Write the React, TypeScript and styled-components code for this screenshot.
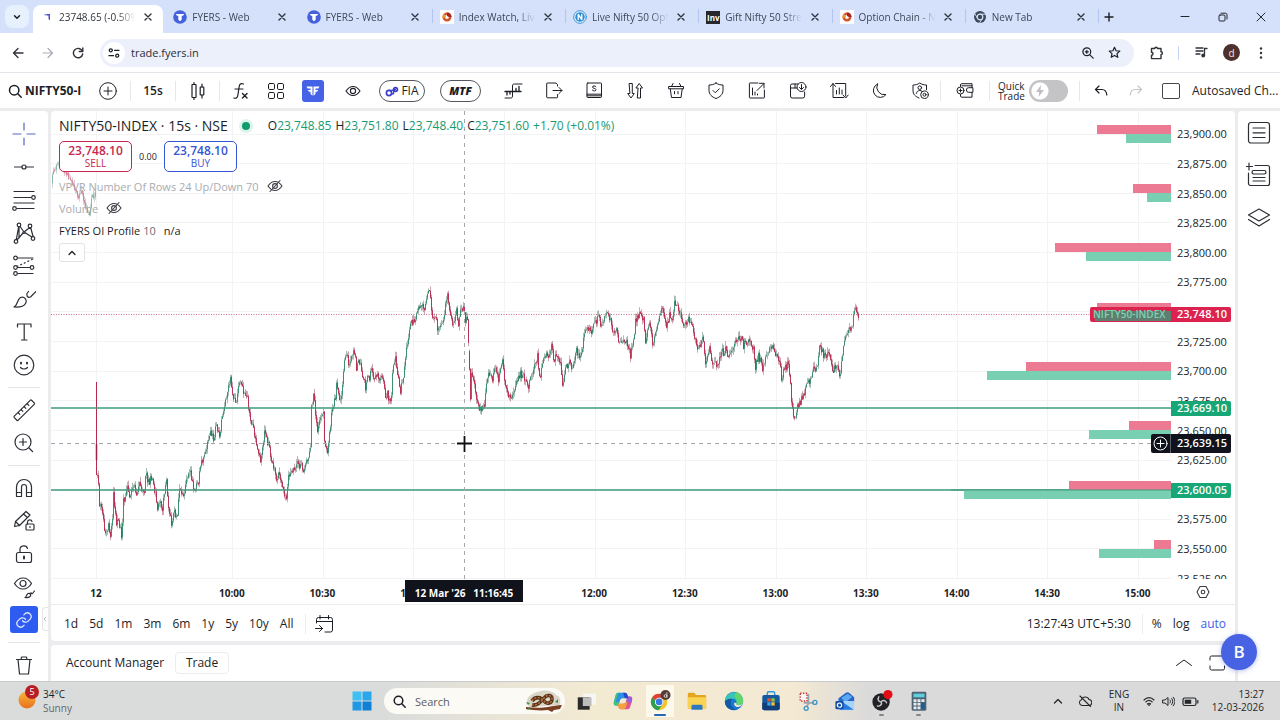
import React from "react";
import styled, { createGlobalStyle, css } from "styled-components";

const CHROME_FONT = '"Open Sans", "Noto Sans", sans-serif';
const INK = "#1c1e26";
const GAP = "#ececee";

const GlobalStyle = createGlobalStyle`
  *, *::before, *::after { box-sizing: border-box; }
  body { margin: 0; background: ${GAP}; color: ${INK}; font-family: ${CHROME_FONT}; font-size: 12px; }
  button { font: inherit; color: inherit; background: none; border: 0; padding: 0; margin: 0; cursor: pointer; }
  a { color: inherit; text-decoration: none; }
`;

const Page = styled.div`
  display: flex;
  flex-direction: column;
  min-height: 100vh;
`;

/* ---------- icons ---------- */

const Svg = styled.svg<{ $size?: number; $w?: number }>`
  display: block;
  flex: none;
  width: ${(p) => p.$size ?? 20}px;
  height: ${(p) => p.$size ?? 20}px;
  fill: none;
  stroke: currentColor;
  stroke-width: ${(p) => p.$w ?? 1};
  stroke-linecap: round;
  stroke-linejoin: round;
`;

type IconProps = { children: React.ReactNode; size?: number; box?: number; w?: number };
const Icon = ({ children, size = 20, box = 20, w = 1 }: IconProps) => (
  <Svg $size={size} $w={w} viewBox={`0 0 ${box} ${box}`} aria-hidden="true">
    {children}
  </Svg>
);

const CloseGlyph = () => (
  <Icon size={8} box={8} w={1.4}>
    <path d="M1 1l6 6M7 1l-6 6" />
  </Icon>
);

/* ---------- browser tab strip ---------- */

const TabStrip = styled.header`
  display: flex;
  height: 33px;
  padding-left: 5px;
  background: #d5e1fb;
`;

const TabSearch = styled.button`
  display: grid;
  place-items: center;
  width: 24px;
  height: 23px;
  margin: 5px 4px 0 0;
  border-radius: 8px;
  background: #e7f1fd;
`;

const Tabs = styled.nav`
  display: flex;
  flex: 0 1 1066px;
  min-width: 0;
`;

const Tab = styled.div<{ $active?: boolean; $divider?: boolean }>`
  display: flex;
  flex: 1 1 0;
  align-items: center;
  gap: 5px;
  min-width: 0;
  height: 28px;
  margin-top: 5px;
  padding: 0 12px 4px 7px;
  color: #3d4657;
  ${(p) =>
    p.$active &&
    css`
      margin-right: 3px;
      padding-right: 9px;
      border-radius: 8px 8px 0 0;
      background: #fff;
      color: #33363d;
    `}
  ${(p) =>
    p.$divider &&
    css`
      background: linear-gradient(#b3c5f0, #b3c5f0) right 4px / 1px 14px no-repeat;
    `}
`;

const TabTitle = styled.a`
  flex: 1;
  min-width: 0;
  overflow: hidden;
  white-space: nowrap;
  font-size: 10px;
  line-height: 16px;
  mask-image: linear-gradient(to right, #000 75%, transparent 98%);
`;

const TabClose = styled.button`
  display: grid;
  place-items: center;
  width: 12px;
  height: 12px;
  color: #2e333d;
`;

const NewTab = styled.button`
  display: grid;
  place-items: center;
  width: 20px;
  height: 33px;
`;

const WindowButtons = styled.div`
  display: flex;
  flex: 1;
  justify-content: flex-end;
`;

const WindowButton = styled.button`
  display: grid;
  place-items: center;
  width: 38px;
  height: 33px;
  color: #22262e;
`;

const FyersDisc = () => (
  <Icon size={14} box={14}>
    <circle cx="7" cy="7" r="6.8" fill="#4460dc" stroke="none" />
    <path d="M2.800 3.900h8.400L10 5.800H8.700v4L7 11.200 5.300 9.800v-4H4z" fill="#fff" stroke="none" />
  </Icon>
);
const FyersPlain = () => (
  <Icon size={14} box={14}>
    <path d="M4 4h3l1 1.500H5z" fill="#8d9bef" stroke="none" />
    <path d="M6.500 4H10v6.500L8.500 9V5.500H7.200z" fill="#4b50d6" stroke="none" />
  </Icon>
);
const NseMark = () => (
  <Icon size={14} box={14}>
    <rect width="14" height="14" fill="#fff" stroke="none" />
    <circle cx="7" cy="7" r="3.200" stroke="#d5542a" strokeWidth="2.600" />
    <path d="M7 2.500A4.500 4.500 0 0 1 11.500 7L7 7z" fill="#a8231d" stroke="none" />
    <path d="M2.700 8.200A4.500 4.500 0 0 1 4 3.700L6.500 7z" fill="#ee9a2c" stroke="none" />
    <path d="M5.800 5.300l3 1.800-3 1.600z" fill="#fff" stroke="none" />
  </Icon>
);
const NCircle = () => (
  <Icon size={14} box={14}>
    <circle cx="7" cy="7" r="6.300" fill="#fff" stroke="#2f8fd3" />
    <circle cx="7" cy="7" r="4.800" fill="#2c8ed6" stroke="none" />
    <path d="M5.200 9.500v-5l3.600 5v-5" stroke="#fff" strokeWidth="1.300" />
  </Icon>
);
const InvMark = styled.span`
  display: grid;
  place-items: center;
  width: 14px;
  height: 13px;
  background: #26282c;
  color: #fff;
  font-size: 8px;
  font-weight: 700;
  line-height: 13px;
`;
const ChromeDark = () => (
  <Icon size={14} box={14}>
    <circle cx="7" cy="7" r="6" fill="#3c4a57" stroke="none" />
    <circle cx="7" cy="7" r="2.800" fill="#3c4a57" stroke="#d5e1fb" strokeWidth="1.200" />
    <path d="M7 4.200h5.500M4.600 8.400L1.900 3.800M9.400 8.400l-2.700 4.500" stroke="#d5e1fb" strokeWidth="0.900" />
  </Icon>
);

const TABS: { title: string; icon: React.ReactNode }[] = [
  { title: "23748.65 (-0.50%)", icon: <FyersPlain /> },
  { title: "FYERS - Web", icon: <FyersDisc /> },
  { title: "FYERS - Web", icon: <FyersDisc /> },
  { title: "Index Watch, Live", icon: <NseMark /> },
  { title: "Live Nifty 50 Opt", icon: <NCircle /> },
  { title: "Gift Nifty 50 Stre", icon: <InvMark>Inv</InvMark> },
  { title: "Option Chain - N", icon: <NseMark /> },
  { title: "New Tab", icon: <ChromeDark /> },
];

const BrowserTabs = () => (
  <TabStrip>
    <TabSearch aria-label="Search tabs">
      <Icon size={8} box={8} w={1.5}>
        <path d="M1.500 2.800L4 5.300l2.500-2.500" />
      </Icon>
    </TabSearch>
    <Tabs aria-label="Tabs">
      {TABS.map((t, i) => (
        <Tab key={i} $active={i === 0} $divider={i > 1}>
          {t.icon}
          <TabTitle href="#">{t.title}</TabTitle>
          <TabClose aria-label="Close tab">
            <CloseGlyph />
          </TabClose>
        </Tab>
      ))}
    </Tabs>
    <NewTab aria-label="New tab">
      <Icon size={10} box={10} w={1.4}>
        <path d="M5 1v8M1 5h8" />
      </Icon>
    </NewTab>
    <WindowButtons>
      <WindowButton aria-label="Minimize">
        <Icon size={10} box={10}>
          <path d="M1 4.500h8" />
        </Icon>
      </WindowButton>
      <WindowButton aria-label="Restore">
        <Icon size={10} box={10}>
          <rect x="1" y="3" width="6" height="6" rx="1" />
          <path d="M3 1.200h4.500A1.500 1.500 0 0 1 9 2.700V7" />
        </Icon>
      </WindowButton>
      <WindowButton aria-label="Close window">
        <Icon size={10} box={10}>
          <path d="M1 1l8 8M9 1L1 9" />
        </Icon>
      </WindowButton>
    </WindowButtons>
  </TabStrip>
);

/* ---------- address bar ---------- */

const AddressRow = styled.div`
  display: flex;
  align-items: center;
  height: 40px;
  padding: 0 4px 0 3px;
  border-bottom: 1px solid #e3e5ea;
  background: #fff;
`;

const NavButton = styled.button<{ $dim?: boolean }>`
  display: grid;
  place-items: center;
  width: 30px;
  height: 28px;
  color: ${(p) => (p.$dim ? "#a9abb0" : "#2f3238")};
`;

const UrlBox = styled.label`
  display: flex;
  flex: 1;
  align-items: center;
  height: 28px;
  margin: 0 8px 0 7px;
  padding: 0 6px 0 3px;
  border-radius: 14px;
  background: #ebf0fb;
`;

const SiteInfo = styled.button`
  display: grid;
  place-items: center;
  width: 22px;
  height: 22px;
  margin-right: 6px;
  border-radius: 50%;
  background: #fff;
`;

const UrlInput = styled.input`
  flex: 1;
  min-width: 0;
  border: 0;
  padding: 0;
  outline: 0;
  background: none;
  color: #2b2e35;
  font-family: ${CHROME_FONT};
  font-size: 11px;
  line-height: 16px;
`;

const UrlAction = styled.button`
  display: grid;
  place-items: center;
  width: 27px;
  height: 28px;
`;

const BarDivider = styled.span`
  width: 1px;
  height: 14px;
  margin: 0 7px 0 6px;
  background: #c7d5f5;
`;

const Avatar = styled.button`
  width: 17px;
  height: 17px;
  margin: 0 6px 0 7px;
  border-radius: 50%;
  background: #4e302c;
  color: #f0e4e1;
  font-size: 10px;
  line-height: 16px;
`;

const AddressBar = () => (
  <AddressRow>
    <NavButton aria-label="Back">
      <Icon size={12} box={12} w={1.3}>
        <path d="M11 6H1.500M6 1.500L1.500 6 6 10.500" />
      </Icon>
    </NavButton>
    <NavButton aria-label="Forward" $dim>
      <Icon size={12} box={12} w={1.2}>
        <path d="M1 6h9.500M6 1.500L10.500 6 6 10.500" />
      </Icon>
    </NavButton>
    <NavButton aria-label="Reload">
      <Icon size={12} box={12} w={1.4}>
        <path d="M10.300 4A4.700 4.700 0 1 0 10.700 7" />
        <path d="M10.800 1v3.500H7.300" />
      </Icon>
    </NavButton>
    <UrlBox>
      <SiteInfo aria-label="Site information">
        <Icon size={12} box={12} w={1.3}>
          <circle cx="2.800" cy="3.300" r="1.500" />
          <path d="M6.500 3.300h4.500M1 8.700h4.500" />
          <circle cx="9.200" cy="8.700" r="1.500" />
        </Icon>
      </SiteInfo>
      <UrlInput aria-label="Address" defaultValue="trade.fyers.in" />
      <UrlAction aria-label="Zoom">
        <Icon size={12} box={12} w={1.2}>
          <circle cx="4.800" cy="4.800" r="3.900" />
          <path d="M7.800 7.800l3.400 3.400M4.800 3.300v3M3.300 4.800h3" />
        </Icon>
      </UrlAction>
      <UrlAction aria-label="Bookmark">
        <Icon size={13} box={24} w={2.2}>
          <path d="M12 2.500l2.900 6.300 6.900.7-5.200 4.600 1.500 6.800L12 17.400l-6.100 3.500 1.500-6.800L2.200 9.500l6.900-.7z" />
        </Icon>
      </UrlAction>
    </UrlBox>
    <NavButton aria-label="Extensions">
      <Icon size={14} box={14} w={1.4}>
        <path d="M1.500 2.500h3.300a1.300 1.300 0 0 1 2.600 0H11v3.300a1.400 1.400 0 0 1 0 2.800v4H1.500V9.200a1.500 1.500 0 0 0 0-3z" />
      </Icon>
    </NavButton>
    <BarDivider />
    <NavButton aria-label="Media">
      <Icon size={13} box={13} w={1.3}>
        <path d="M1 2h7M1 5h7M1 8h4" />
        <circle cx="8.200" cy="9.500" r="1.300" fill="currentColor" />
        <path d="M9.500 9.500V2.500h2.500" />
      </Icon>
    </NavButton>
    <Avatar aria-label="Profile">d</Avatar>
    <NavButton aria-label="Menu">
      <Icon size={12} box={12}>
        <g fill="currentColor" stroke="none">
          <circle cx="6" cy="1.500" r="1.200" />
          <circle cx="6" cy="6" r="1.200" />
          <circle cx="6" cy="10.500" r="1.200" />
        </g>
      </Icon>
    </NavButton>
  </AddressRow>
);

/* ---------- chart toolbar ---------- */

const Toolbar = styled.div`
  display: flex;
  align-items: center;
  height: 35px;
  margin-bottom: 3px;
  padding-left: 8px;
  overflow: hidden;
  background: #fff;
`;

const SymbolButton = styled.button`
  display: flex;
  align-items: center;
  gap: 3px;
  width: 75px;
  overflow: hidden;
  white-space: nowrap;
  font-size: 12px;
  font-weight: 700;
  line-height: 18px;
`;

const ToolButton = styled.button<{ $w?: number; $dim?: boolean; $bold?: boolean }>`
  display: grid;
  flex: none;
  place-items: center;
  width: ${(p) => p.$w ?? 40}px;
  height: 34px;
  color: ${(p) => (p.$dim ? "#c4c6cb" : INK)};
  font-size: 12px;
  font-weight: ${(p) => (p.$bold ? 600 : 400)};
`;

const ToolDivider = styled.span`
  flex: none;
  width: 1px;
  height: 20px;
  background: #e6e7ea;
`;

const BrandButton = styled.button`
  display: grid;
  flex: none;
  place-items: center;
  width: 22px;
  height: 22px;
  margin: 0 9px 0 8px;
  border-radius: 3px;
  background: #4563e6;
`;

const PillRow = styled.div`
  display: flex;
  flex: none;
  margin-left: 6px;
`;

const Pill = styled.button<{ $italic?: boolean }>`
  display: flex;
  flex: none;
  align-items: center;
  justify-content: center;
  gap: 2px;
  width: ${(p) => (p.$italic ? 41 : 46)}px;
  height: 22px;
  margin-right: ${(p) => (p.$italic ? 12 : 15)}px;
  border: 1px solid #55575e;
  border-radius: 11px;
  font-size: ${(p) => (p.$italic ? 11 : 12)}px;
  font-weight: ${(p) => (p.$italic ? 800 : 500)};
  font-style: ${(p) => (p.$italic ? "italic" : "normal")};
  line-height: 20px;
`;

const ToolGroup = styled.div`
  display: flex;
  flex: 1 0 auto;
  justify-content: space-between;
`;

const QuickTrade = styled.label`
  display: flex;
  flex: none;
  align-items: center;
  gap: 4px;
  width: 89px;
  padding-left: 8px;
  font-size: 10px;
  line-height: 10px;
`;

const Switch = styled.input`
  appearance: none;
  flex: none;
  width: 39px;
  height: 22px;
  margin: 0;
  border-radius: 11px;
  background: radial-gradient(circle at 11px 11px, #fff 8px, transparent 9px), #c4c4c6;
`;

const SwitchWrap = styled.span`
  position: relative;
  display: flex;
`;

const Bolt = styled.span`
  position: absolute;
  top: 4px;
  left: 4px;
  color: #c0c0c3;
`;

const SaveBox = styled.input`
  appearance: none;
  flex: none;
  width: 18px;
  height: 16px;
  margin: 0;
  border: 1px solid #44464d;
  border-radius: 2px;
`;

const SaveLabel = styled.label`
  display: flex;
  flex: none;
  align-items: center;
  gap: 12px;
  width: 130px;
  padding-left: 12px;
  white-space: nowrap;
  font-size: 12px;
  font-weight: 500;
`;

const TOOL_ICONS: { name: string; art: React.ReactNode }[] = [
  {
    name: "Strategy",
    art: (
      <>
        <path d="M2 17h5.500c1.500 0 2-.5 2-2V5c0-1.500.5-2 2-2H19" />
        <path d="M2 10.500h16M4 10.500V14M7 10.500v2.500M13 10.500V7.500M16 10.500V5.500" strokeWidth="1.300" />
      </>
    ),
  },
  {
    name: "Exit positions",
    art: (
      <path d="M13.500 5V3.500L12 2H3.500A.8.8 0 0 0 2.700 3v13a.8.8 0 0 0 .8.800h9.300a.8.8 0 0 0 .8-.8v-2.500M9 9.500h9M15 6.500l3 3-3 3" />
    ),
  },
  {
    name: "Straddle",
    art: (
      <>
        <rect x="3" y="2" width="14.500" height="14.500" rx="0.800" />
        <path d="M3 13.200h14.500M3 14.800h14.500" />
        <path d="M12 5.600c-.8-1-3.500-1-3.500.5s3.500 1 3.500 2.600-2.900 1.600-3.700.4" />
      </>
    ),
  },
  {
    name: "Buy and sell orders",
    art: (
      <>
        <path d="M4.500 2.500h2.800v10h2L6 17l-3.300-4.500h1.800z" />
        <path d="M12.700 17h2.800V7h2L14.200 2.500 10.900 7h1.800z" />
      </>
    ),
  },
  {
    name: "Basket",
    art: (
      <>
        <path d="M3 5.500h14.500v2.300H3zM4.300 8l1.200 8.500h9.500L16.200 8M5.500 5.500L7 2.500M15 5.500l-1.500-3M8.500 10.500v2.300M12 10.500v2.300" />
      </>
    ),
  },
  {
    name: "Protection",
    art: (
      <>
        <path d="M10 2c2 1.500 4.500 2 7 2v5.500c0 4-3 6.500-7 8-4-1.500-7-4-7-8V4c2.500 0 5-.5 7-2z" />
        <path d="M7 9.500l2.300 2.300 4-4" />
      </>
    ),
  },
  {
    name: "Analysis",
    art: (
      <>
        <path d="M11 2H3a.6.6 0 0 0-.6.6v13.800a.6.6 0 0 0 .6.6h13.800a.6.6 0 0 0 .6-.6V9M5.500 14V7M8 14v-3M10.500 14v-1" />
        <path d="M10 9.500L17 2.500M12.500 2.300H17V7" />
      </>
    ),
  },
  {
    name: "Order history",
    art: (
      <>
        <path d="M10 3H4a1.500 1.500 0 0 0-1.500 1.500V15A1.800 1.800 0 0 0 4.300 17h10.500a1.800 1.800 0 0 0 1.800-1.800V11M2.500 7H9M7 3v4" />
        <circle cx="13.500" cy="6" r="4.500" />
        <path d="M13.500 3.500V8M11.500 6.500l2 2 2-2" />
      </>
    ),
  },
  {
    name: "Market depth",
    art: (
      <>
        <path d="M6.500 2.500h10.200V15M1.500 5.500l2.500-3 2.500 3M4 2.500V16.500h10.500M14 14l2.700 3 2.500-3M7.500 13V9.500M10.300 13V7M13 13v-4" />
      </>
    ),
  },
  {
    name: "Dark theme",
    art: <path d="M8.500 3A7 7 0 1 0 17 13.500 7.500 7.500 0 0 1 8.500 3z" />,
  },
  {
    name: "Account safety",
    art: (
      <>
        <path d="M16.500 8.500V4c-2.500 0-4.500-.5-6.700-2C7.600 3.500 5.500 4 3 4v5.500c0 4 2.500 6 6 7.500" />
        <circle cx="9.800" cy="6.700" r="1.800" />
        <path d="M6.300 12.500c.5-2 1.700-3 3.500-3 1 0 1.700.3 2.300.8" />
        <circle cx="14.500" cy="13.700" r="3.800" />
        <circle cx="14.500" cy="13.700" r="1.500" />
      </>
    ),
  },
];

const ChartToolbar = () => (
  <Toolbar>
    <SymbolButton>
      <Icon size={14} box={14} w={1.5}>
        <circle cx="6.200" cy="6.200" r="4.700" />
        <path d="M9.800 9.800l3.400 3.400" />
      </Icon>
      NIFTY50-I
    </SymbolButton>
    <ToolButton $w={47} aria-label="Compare">
      <Icon size={22} box={22}>
        <circle cx="12" cy="11" r="8.300" />
        <path d="M12 7v8M8 11h8" />
      </Icon>
    </ToolButton>
    <ToolDivider />
    <ToolButton $w={44} $bold>
      15s
    </ToolButton>
    <ToolDivider />
    <ToolButton $w={43} aria-label="Candles">
      <Icon w={1.2}>
        <rect x="4" y="3.500" width="4" height="13" rx="0.500" />
        <path d="M6 1.500v2M6 16.500v2M14 3v3M14 14v3" />
        <rect x="12.200" y="6" width="3.600" height="8" rx="0.500" />
      </Icon>
    </ToolButton>
    <ToolDivider />
    <ToolButton aria-label="Indicators">
      <Icon w={1.200}>
        <path d="M13.500 3c-2.800-1.300-4 .3-4.400 3L7.900 14c-.4 2.800-1.600 3.800-4.100 3M5 8h8" />
        <path d="M12.500 12.500l4.500 4.500M17 12.500L12.500 17" strokeWidth="1.400" />
      </Icon>
    </ToolButton>
    <ToolButton $w={34} aria-label="Layouts">
      <Icon>
        <rect x="1.500" y="2.500" width="6" height="6" rx="1.300" />
        <rect x="10.500" y="2.500" width="6" height="6" rx="1.300" />
        <rect x="1.500" y="11.500" width="6" height="6" rx="1.300" />
        <rect x="10.500" y="11.500" width="6" height="6" rx="1.300" />
      </Icon>
    </ToolButton>
    <BrandButton aria-label="Fyers">
      <Icon size={16} box={16}>
        <g fill="#fff" stroke="none">
          <path d="M1.500 3.500h6v9.200L5.500 11V8.800H4L2.800 7h2.700V5.400H2.600z" />
          <path d="M14.500 3.500h-6v9.200l2-1.700V8.800H12L13.200 7h-2.700V5.400h2.900z" />
        </g>
      </Icon>
    </BrandButton>
    <ToolButton aria-label="Watch">
      <Icon size={16} box={16} w={1.1}>
        <path d="M1 8c2-3 4.300-4.500 7-4.500S13 5 15 8c-2 3-4.300 4.500-7 4.500S3 11 1 8z" />
        <circle cx="8" cy="8" r="2.600" />
      </Icon>
    </ToolButton>
    <PillRow>
      <Pill>
        <Icon size={14} box={14} w={1.7}>
          <g stroke="#3a3fc9">
            <circle cx="4" cy="9" r="2.600" />
            <circle cx="10.500" cy="5.500" r="1.900" />
            <path d="M4 6.400h2.500c1 0 2-.9 4-.9M6.600 9c.4 1 1.500 1.400 2 .4l0-3.900" strokeWidth="1.300" />
          </g>
        </Icon>
        FIA
      </Pill>
      <Pill $italic>MTF</Pill>
    </PillRow>
    <ToolGroup>
      {TOOL_ICONS.map((t) => (
        <ToolButton key={t.name} aria-label={t.name}>
          <Icon>{t.art}</Icon>
        </ToolButton>
      ))}
    </ToolGroup>
    <ToolDivider />
    <ToolButton $w={48} aria-label="Funds">
      <Icon>
        <path d="M5.500 5.500V4A1.300 1.300 0 0 1 6.800 2.700H17V6.500M17 11.500v4.700H6.800a1.300 1.300 0 0 1-1.300-1.200v-1.500M7 4.800h10" />
        <circle cx="5.500" cy="9.500" r="3.500" />
        <path d="M5.500 8v3M4 9.500h3M17.500 6.700h-3.800a2.300 2.300 0 0 0 0 4.600h3.800z" />
      </Icon>
    </ToolButton>
    <ToolDivider />
    <QuickTrade>
      <span>
        Quick
        <br />
        Trade
      </span>
      <SwitchWrap>
        <Switch type="checkbox" role="switch" />
        <Bolt>
          <Icon size={14} box={14}>
            <path d="M8 1L3 8h3.200L5.500 13 11 6H7.500z" fill="currentColor" stroke="none" />
          </Icon>
        </Bolt>
      </SwitchWrap>
    </QuickTrade>
    <ToolDivider />
    <ToolButton $w={42} aria-label="Undo">
      <Icon size={14} box={14} w={1.200}>
        <path d="M5 2L1.500 5.500 5 9M1.500 5.500h6.300c3 0 4.700 1.800 5 5.500" />
      </Icon>
    </ToolButton>
    <ToolButton $w={28} $dim aria-label="Redo">
      <Icon size={14} box={14} w={1.200}>
        <path d="M9 2l3.500 3.500L9 9M12.500 5.500H6.200c-3 0-4.700 1.800-5 5.500" />
      </Icon>
    </ToolButton>
    <SaveLabel>
      <SaveBox type="checkbox" />
      Autosaved Ch...
    </SaveLabel>
  </Toolbar>
);

/* ---------- workspace ---------- */

const Workspace = styled.main`
  display: grid;
  flex: 1;
  grid-template-columns: 48px minmax(0, 1fr) 42px;
  column-gap: 3px;
`;

const Rail = styled.nav<{ $right?: boolean }>`
  position: relative;
  display: flex;
  flex-direction: column;
  align-items: center;
  padding-top: ${(p) => (p.$right ? 1 : 6)}px;
  border-radius: ${(p) => (p.$right ? "4px 0 0 0" : "0 4px 0 0")};
  background: #fff;
`;

const RailButton = styled.button<{ $tall?: boolean; $color?: string }>`
  display: grid;
  flex: none;
  place-items: center;
  width: 40px;
  height: ${(p) => (p.$tall ? 42 : 33)}px;
  color: ${(p) => p.$color ?? "#2c2e35"};
`;

const LinkButton = styled.button`
  display: grid;
  flex: none;
  place-items: center;
  width: 28px;
  height: 27px;
  margin: 3px 0;
  border-radius: 3px;
  background: #2f5cf0;
  color: #dfe6ff;
`;

const RailDivider = styled.span`
  flex: none;
  width: 32px;
  height: 1px;
  margin: 6px 0 5px;
  background: #e4e5e8;
`;

const RailHandle = styled.button`
  position: absolute;
  right: 0;
  bottom: 50px;
  width: 6px;
  height: 24px;
  border: 1px solid #e4e5e8;
  border-right: 0;
  border-radius: 4px 0 0 4px;
  color: #a6a8ad;
`;

const RAIL_TOP: { name: string; color?: string; art: React.ReactNode }[] = [
  {
    name: "Crosshair",
    color: "#5566c4",
    art: <path d="M12 1v7M12 16v7M1 12h8M15 12h8" />,
  },
  {
    name: "Trend line",
    art: (
      <>
        <circle cx="12" cy="12" r="2" />
        <path d="M2.500 12H10M14 12h7.500" />
      </>
    ),
  },
  {
    name: "Fib retracement",
    art: (
      <>
        <path d="M2 3.500h20M2 9.500h18M2 15h20M4 20.500h18" />
        <circle cx="21.500" cy="9.500" r="1.800" fill="#fff" />
        <circle cx="2.500" cy="20.500" r="1.800" fill="#fff" />
      </>
    ),
  },
  {
    name: "Patterns",
    art: (
      <>
        <path d="M4 20L7 4l5 7 6.500-5L21.500 17 12 11 4 20M7 4v13" />
        <g fill="#fff">
          <circle cx="4" cy="20.500" r="1.800" />
          <circle cx="7" cy="4" r="1.800" />
          <circle cx="18" cy="5" r="1.800" />
          <circle cx="21" cy="17.500" r="1.800" />
          <circle cx="12" cy="11.500" r="1" />
        </g>
      </>
    ),
  },
  {
    name: "Forecasting",
    art: (
      <>
        <path d="M4 4h17M4 13.500h15M4 19.500h17" />
        <path d="M5 12.500L21 5" strokeDasharray="1 3" />
        <g fill="#fff">
          <circle cx="3.500" cy="4" r="1.800" />
          <circle cx="3.500" cy="13.500" r="1.800" />
          <circle cx="20" cy="13.500" r="1.800" />
          <circle cx="3.500" cy="19.500" r="1.800" />
        </g>
      </>
    ),
  },
  {
    name: "Brush",
    art: (
      <path d="M2 20c4-1.500 2.500-7 6.500-9.500 4-1.500 7 2.500 5 6-2 3.500-6 4-11.500 3.500M15 6.500c-.5 3 1 4.500 3.500 3.500L24 4.500M15 6.500l1.500-2" />
    ),
  },
  {
    name: "Text",
    art: <path d="M5.500 7V4h13.500v3M12.200 4v16M9.500 20H15" />,
  },
  {
    name: "Emoji",
    art: (
      <>
        <circle cx="12" cy="12" r="9.800" />
        <path d="M8.500 14.500c1.800 2 5.200 2 7 0" />
        <path d="M9 9.800v.6M15 9.800v.6" strokeWidth="2" />
      </>
    ),
  },
];

const RAIL_MID: { name: string; art: React.ReactNode }[] = [
  {
    name: "Measure",
    art: (
      <path d="M2.300 18.200L18.200 2.300a1 1 0 0 1 1.400 0l2.600 2.600a1 1 0 0 1 0 1.400L6.300 22.200a1 1 0 0 1-1.400 0l-2.600-2.600a1 1 0 0 1 0-1.400zM6 14.500l1.800 1.800M9 11.500l1.800 1.800M12 8.500l1.800 1.800M15 5.500l1.800 1.800" />
    ),
  },
  {
    name: "Zoom in",
    art: (
      <>
        <circle cx="11" cy="11" r="8" />
        <path d="M17 17l3.500 3.500M11 7.500v7M7.500 11h7" />
      </>
    ),
  },
];

const RAIL_LOW: { name: string; art: React.ReactNode }[] = [
  {
    name: "Magnet",
    art: (
      <path d="M4.500 20.500V11a7.500 7.500 0 0 1 15 0v9.500h-5V11a2.500 2.500 0 0 0-5 0v9.500zM4.500 16.500h5M14.500 16.500h5" />
    ),
  },
  {
    name: "Stay in drawing mode",
    art: (
      <>
        <path d="M2.500 17.500l1-5L14 2.500l4 3.500L7.500 16.500zM11.500 5l3.800 3.500M3.500 12.500l4 4" />
        <rect x="14" y="15" width="8" height="6" rx="1" />
        <path d="M15.500 15v-2a2.300 2.300 0 0 1 4.500-.5M18 17.500v1" />
      </>
    ),
  },
  {
    name: "Lock drawings",
    art: (
      <>
        <rect x="4.500" y="10.500" width="15" height="10" rx="2" />
        <path d="M8 10.500V7.500c0-4.500 6.500-5 7.500-1" />
        <path d="M12 14.500v2" strokeWidth="2" />
      </>
    ),
  },
  {
    name: "Hide drawings",
    art: (
      <>
        <path d="M2.500 8.500c2.500-4 5.500-5.500 8.500-5.500s6 1.500 8.500 5.500c-2.500 4-5.500 5.500-8.500 5.500s-6-1.500-8.500-5.500z" />
        <circle cx="11" cy="8.500" r="3" />
        <path d="M13 22.500c2-.5 1-3 3-4 2.500-.5 3.500 1.500 2 3-1.200 1.200-3 1.200-5 1zM19 17.500c0 1 .8 1.300 1.500 1L22.500 16" />
      </>
    ),
  },
];

const RailTools = ({ tools }: { tools: { name: string; color?: string; art: React.ReactNode }[] }) => (
  <>
    {tools.map((r) => (
      <RailButton key={r.name} aria-label={r.name} $color={r.color}>
        <Icon size={24} box={24} w={1.200}>
          {r.art}
        </Icon>
      </RailButton>
    ))}
  </>
);

const DrawingRail = () => (
  <Rail aria-label="Drawing tools">
    <RailTools tools={RAIL_TOP} />
    <RailDivider />
    <RailTools tools={RAIL_MID} />
    <RailDivider />
    <RailTools tools={RAIL_LOW} />
    <LinkButton aria-label="Sync drawings">
      <Icon size={18} box={24} w={1.700}>
        <path d="M10 13a5 5 0 0 0 7.500.5l3-3a5 5 0 0 0-7-7l-1.700 1.700" />
        <path d="M14 11a5 5 0 0 0-7.500-.5l-3 3a5 5 0 0 0 7 7l1.700-1.700" />
      </Icon>
    </LinkButton>
    <RailDivider />
    <RailButton aria-label="Remove drawings">
      <Icon size={24} box={24} w={1.200}>
        <path d="M4.500 6.500h15M9 6.500l.5-2.500h5l.5 2.500M6 6.500L7.500 21h9L18 6.500" />
      </Icon>
    </RailButton>
    <RailHandle aria-label="Hide drawing toolbar">
      <Icon size={4} box={4} w={0.800}>
        <path d="M3 0L1 2l2 2" />
      </Icon>
    </RailHandle>
  </Rail>
);

const WidgetRail = () => (
  <Rail $right aria-label="Widgets">
    <RailButton $tall aria-label="Watchlist">
      <Icon size={24} box={24} w={1.200}>
        <rect x="1.500" y="1.500" width="21" height="20.500" rx="2.500" />
        <path d="M6 7h12M6 11.800h12M6 16.500h12" />
      </Icon>
    </RailButton>
    <RailButton $tall aria-label="Add watchlist">
      <Icon size={26} box={26} w={1.200}>
        <path d="M9 3.500h12.500A2 2 0 0 1 23.500 5.500v16a2 2 0 0 1-2 2h-17a2 2 0 0 1-2-2V11M3 1v7M0 4.500h6.500" />
        <rect x="6" y="8.500" width="14" height="3.500" rx="1.700" />
        <path d="M7 15.500h12M7 19h12" />
      </Icon>
    </RailButton>
    <RailButton $tall aria-label="Object tree">
      <Icon size={24} box={24} w={1.200}>
        <path d="M12 4l10.500 6L12 16 1.500 10zM1.500 14.500l10.500 6.500 10.500-6.500" />
      </Icon>
    </RailButton>
  </Rail>
);

/* ---------- price plot ---------- */

const PLOT_W = 1120;
const PLOT_H = 468;

/* Turning points of the price line, in plot units. */
const SESSION: [number, number][] = [
  [46, 364], [48, 372], [49, 396], [51, 392], [53, 410], [55, 425], [57, 418], [58, 413], [60, 422], [62, 410],
  [63, 382], [64, 392], [66, 412], [68, 408], [70, 418], [71, 425], [73, 390], [75, 384], [77, 374], [79, 388],
  [81, 380], [83, 372], [86, 387], [89, 370], [91, 378], [94, 379], [95, 362], [98, 370], [101, 368], [104, 378],
  [107, 396], [110, 393], [112, 397], [114, 380], [116, 368], [118, 394], [121, 411], [124, 401], [127, 404],
  [129, 374], [133, 384], [137, 366], [140, 363], [144, 381], [148, 369], [151, 350], [153, 346], [156, 336],
  [159, 322], [163, 327], [166, 314], [169, 322], [171, 312], [174, 296], [176, 286], [178, 274], [180, 267],
  [183, 286], [186, 292], [188, 271], [192, 278], [197, 288], [200, 312], [203, 318], [206, 331], [210, 350],
  [214, 320], [218, 334], [222, 352], [226, 367], [229, 362], [233, 378], [236, 388], [238, 366], [242, 361],
  [247, 352], [250, 354], [254, 358], [257, 350], [260, 336], [261, 296], [263, 284], [267, 319], [270, 302],
  [273, 299], [274, 328], [277, 339], [279, 320], [281, 304], [283, 292], [285, 289], [286, 274], [290, 289],
  [292, 272], [294, 250], [296, 241], [298, 250], [304, 241], [306, 256], [308, 248], [311, 257], [315, 277],
  [317, 262], [319, 267], [321, 257], [324, 267], [327, 261], [329, 267], [332, 269], [335, 284], [337, 282],
  [340, 293], [341, 284], [342, 260], [345, 246], [347, 262], [350, 280], [353, 264], [356, 236], [358, 230],
  [360, 214], [364, 208], [367, 201], [370, 192], [374, 195], [378, 178], [380, 188], [382, 203], [385, 207],
  [387, 217], [390, 211], [392, 214], [395, 194], [397, 186], [399, 198], [403, 215], [406, 201], [408, 214],
  [411, 194], [413, 198], [415, 209], [417, 207], [418, 228],
];
const SESSION_TAIL: [number, number][] = [
  [418, 240], [419, 262], [420, 284], [421, 260], [423, 267], [425, 279], [428, 297], [430, 299], [434, 292],
  [437, 264], [439, 264], [442, 267], [445, 255], [448, 267], [452, 246], [454, 269], [458, 282], [462, 287],
  [466, 269], [470, 262], [474, 267], [478, 277], [482, 261], [487, 245], [489, 268], [493, 249], [495, 242],
  [498, 246], [501, 235], [503, 249], [507, 242], [510, 254], [512, 271], [515, 259], [519, 249], [522, 257],
  [526, 240], [530, 246], [532, 239], [534, 219], [537, 214], [540, 222], [545, 211], [548, 204], [550, 213],
  [556, 204], [560, 206], [562, 224], [566, 219], [569, 234], [573, 226], [577, 234], [580, 244], [583, 229],
  [585, 209], [589, 202], [593, 209], [595, 232], [599, 211], [602, 232], [606, 219], [610, 204], [612, 194],
  [616, 219], [619, 204], [622, 207], [624, 192], [628, 199], [633, 214], [638, 207], [642, 214], [646, 234],
  [649, 236], [652, 224], [655, 254], [659, 237], [662, 254], [667, 254], [671, 239], [674, 242], [676, 236],
  [678, 249], [681, 239], [685, 231], [689, 224], [693, 234], [698, 229], [703, 237], [705, 256], [708, 244],
  [712, 256], [716, 244], [721, 234], [725, 242], [729, 247], [731, 267], [734, 256], [738, 253], [740, 269],
  [741, 289], [744, 309], [746, 304], [747, 294], [752, 287], [755, 277], [759, 269], [761, 264], [764, 254],
  [766, 259], [769, 236], [772, 241], [775, 247], [778, 239], [782, 259], [786, 256], [790, 264], [792, 244],
  [793, 234], [796, 226], [799, 214], [801, 219], [804, 199], [807, 199], [808, 205],
];
const PREVIOUS: [number, number][] = [
  [1, 72], [3, 62], [5, 56], [8, 50], [12, 56], [20, 66], [24, 76], [28, 90], [31, 76], [35, 95], [39, 102], [41, 90], [45, 80],
];

type Bar = { x: number; open: number; close: number; high: number; low: number };

const buildBars = (points: [number, number][], seed: number): Bar[] => {
  let s = seed;
  const rand = () => {
    s = (s * 16807) % 2147483647;
    return s / 2147483647;
  };
  const bars: Bar[] = [];
  let prev = points[0][1];
  for (let i = 1; i < points.length; i++) {
    const [x0, y0] = points[i - 1];
    const [x1, y1] = points[i];
    for (let x = x0; x < x1; x++) {
      const t = (x + 1 - x0) / (x1 - x0);
      const target = y0 + (y1 - y0) * t;
      const close = target + (rand() - 0.5) * 8;
      bars.push({
        x,
        open: prev,
        close,
        high: Math.min(prev, close) - rand() * 5,
        low: Math.max(prev, close) + rand() * 5,
      });
      prev = close;
    }
  }
  return bars;
};

const BARS = [...buildBars(SESSION, 71), ...buildBars(SESSION_TAIL, 907)];
const OLD_BARS = buildBars(PREVIOUS, 33);

const wick = (b: Bar) => `M${b.x + 0.5} ${b.high.toFixed(1)}V${b.low.toFixed(1)}`;
const body = (b: Bar) => `M${b.x + 0.5} ${b.open.toFixed(1)}V${(b.close + 0.6).toFixed(1)}`;
const isUp = (b: Bar) => b.close < b.open;

const Candles = ({ bars }: { bars: Bar[] }) => (
  <g fill="none">
    <path d={bars.filter(isUp).map(wick).join("")} stroke="#6f8f86" strokeOpacity="0.6" />
    <path d={bars.filter((b) => !isUp(b)).map(wick).join("")} stroke="#a8687c" strokeOpacity="0.6" />
    <path d={bars.filter(isUp).map(body).join("")} stroke="#2f8a6c" strokeOpacity="0.9" />
    <path d={bars.filter((b) => !isUp(b)).map(body).join("")} stroke="#b8284f" strokeOpacity="0.9" />
  </g>
);

/* Open interest per strike: [top, call width, put width]. */
const OI: [number, number, number][] = [
  [14, 74, 45],
  [73, 38, 24],
  [132, 116, 85],
  [192, 74, 0],
  [251, 145, 184],
  [310, 42, 82],
  [370, 102, 207],
  [429, 17, 72],
];

const GRID_X = [45, 181, 272, 362, 453, 544, 634, 725, 815, 906, 996, 1087];
const GRID_Y = Array.from({ length: 16 }, (_, i) => Math.round(22.500 + i * 29.640));

const ChartCard = styled.section`
  display: grid;
  flex: 1;
  grid-template-columns: minmax(0, 1fr) 64px;
  grid-template-rows: minmax(0, 1fr) 26px 36px;
  border-radius: 4px;
  background: #fff;
`;

const Plot = styled.div`
  position: relative;
  min-height: 400px;
`;

const PlotSvg = styled.svg`
  position: absolute;
  inset: 0;
  width: 100%;
  height: 100%;
`;

const Legend = styled.div`
  position: absolute;
  top: 5px;
  left: 8px;
`;

const LegendTop = styled.div`
  display: flex;
  align-items: center;
  height: 20px;
  white-space: nowrap;
`;

const LegendTitle = styled.h1`
  margin: 0;
  font-size: 14px;
  font-weight: 400;
  line-height: 20px;
`;

const LiveDot = styled.span`
  width: 8px;
  height: 8px;
  margin: 0 18px 0 14px;
  border-radius: 50%;
  background: #119a6d;
  box-shadow: 0 0 0 3px #dcf4ec;
`;

const Ohlc = styled.span`
  margin-right: 4px;
  font-size: 12px;
  line-height: 18px;

  b {
    color: #189a72;
    font-weight: 400;
  }
`;

const TradeRow = styled.div`
  display: flex;
  align-items: center;
  margin: 5px 0 3px;
`;

const TradeButton = styled.button<{ $color: string }>`
  width: 73px;
  height: 31px;
  border: 1px solid ${(p) => p.$color};
  border-radius: 5px;
  background: #fff;
  color: ${(p) => p.$color};
  font-size: 10px;
  line-height: 13px;

  strong {
    display: block;
    font-size: 12px;
    font-weight: 600;
  }
`;

const Spread = styled.span`
  width: 32px;
  font-size: 9px;
  text-align: center;
`;

const Study = styled.div<{ $muted?: boolean }>`
  display: flex;
  align-items: center;
  gap: 8px;
  height: 22px;
  color: ${(p) => (p.$muted ? "#a9abaf" : INK)};
  font-size: 11px;
  font-weight: 500;
  white-space: nowrap;

  i {
    color: #6c6e75;
    font-style: normal;
  }
`;

const StudyToggle = styled.button`
  color: #3a3c43;
`;

const CollapseButton = styled.button`
  display: grid;
  place-items: center;
  width: 26px;
  height: 19px;
  margin-top: 2px;
  border: 1px solid #e2e3e6;
  border-radius: 3px;
  background: #fff;
`;

const HiddenEye = () => (
  <Icon size={16} box={16} w={1.100}>
    <path d="M1 8c2-3 4.300-4.500 7-4.500S13 5 15 8c-2 3-4.300 4.500-7 4.500S3 11 1 8z" />
    <circle cx="8" cy="8" r="2.400" />
    <path d="M3 13.500L13 2.500" />
  </Icon>
);

const SymbolFlag = styled.span<{ $y: number }>`
  position: absolute;
  top: ${(p) => (p.$y / PLOT_H) * 100}%;
  right: 0;
  width: 81px;
  height: 15px;
  padding-left: 3px;
  border-radius: 2px 0 0 2px;
  background: linear-gradient(#5f7d70, #5f7d70) 5px 4px / 76px 10px no-repeat, #dc2350;
  color: #79d4b2;
  font-size: 10px;
  font-weight: 600;
  line-height: 15px;
  white-space: nowrap;
`;

const AddAlert = styled.button<{ $y: number }>`
  position: absolute;
  top: ${(p) => (p.$y / PLOT_H) * 100}%;
  right: 0;
  display: grid;
  place-items: center;
  width: 20px;
  height: 19px;
  border-right: 1px solid #5a5c66;
  border-radius: 2px 0 0 2px;
  background: #10121c;
  color: #fff;
`;

const PriceAxis = styled.div`
  position: relative;
  display: flex;
  flex-direction: column;
  overflow: hidden;
  padding-top: 8px;
`;

const PriceTicks = styled.div`
  display: grid;
  flex: 1;
  grid-template-rows: repeat(16, minmax(0, 1fr));
  align-items: center;
  margin-bottom: -14px;
  padding-left: 6px;
  font-size: 11px;
  line-height: 15px;
`;

const PriceTag = styled.span<{ $y: number; $color: string; $tall?: boolean }>`
  position: absolute;
  top: ${(p) => (p.$y / PLOT_H) * 100}%;
  left: 0;
  width: 60px;
  height: ${(p) => (p.$tall ? 19 : 15)}px;
  padding-left: 6px;
  border-radius: 0 2px 2px 0;
  background: ${(p) => p.$color};
  color: #fff;
  font-size: 11px;
  font-weight: 600;
  line-height: ${(p) => (p.$tall ? 18 : 14)}px;
`;

const TimeAxis = styled.div`
  position: relative;
  border-bottom: 1px solid #ececef;
`;

const TimeTicks = styled.div`
  display: grid;
  grid-template-columns: 450fr 228fr repeat(11, 453fr);
  margin-right: -12px;
  font-size: 10px;
  font-weight: 700;
  line-height: 28px;
  height: 25px;
  text-align: center;

  span:nth-child(2) {
    grid-column: 3 / 4;
  }
`;

const TimeTag = styled.span`
  position: absolute;
  top: 1px;
  left: ${(354 / PLOT_W) * 100}%;
  width: 118px;
  height: 22px;
  background: #10121c;
  color: #fff;
  font-size: 10px;
  font-weight: 700;
  line-height: 26px;
  text-align: center;
  white-space: pre;
`;

const AxisCorner = styled.button`
  display: grid;
  place-items: center;
  border-bottom: 1px solid #ececef;
  color: #3a3c43;
`;

const RangeBar = styled.div`
  display: flex;
  grid-column: 1 / -1;
  align-items: center;
  padding: 2px 9px 0 13px;
  font-size: 12px;
  font-weight: 500;
`;

const RangeButton = styled.button<{ $accent?: boolean }>`
  margin-right: 11px;
  color: ${(p) => (p.$accent ? "#3a5fe5" : "inherit")};
  line-height: 18px;

  &:last-child {
    margin-right: 0;
  }
`;

const RangeDivider = styled.span`
  width: 1px;
  height: 20px;
  background: #ececef;
`;

const GotoDate = styled.button`
  margin: 0 auto 0 8px;
`;

const ScaleOptions = styled.div`
  display: flex;
  margin-left: 9px;
`;

const PRICES = Array.from({ length: 16 }, (_, i) => `${(23900 - i * 25).toLocaleString("en-US")}.00`);
/* The 11:30 tick has no label: the crosshair's time tag takes its place. */
const TIMES = ["12", "10:00", "10:30", "11:00", "", "12:00", "12:30", "13:00", "13:30", "14:00", "14:30", "15:00"];
const RANGES = ["1d", "5d", "1m", "3m", "6m", "1y", "5y", "10y", "All"];

const Chart = () => (
  <ChartCard>
    <Plot>
      <PlotSvg viewBox={`0 0 ${PLOT_W} ${PLOT_H}`} preserveAspectRatio="none" role="img" aria-label="Price chart">
        <g stroke="#f3f3f5">
          {GRID_X.map((x) => (
            <path key={x} d={`M${x + 0.5} 0V${PLOT_H}`} />
          ))}
          {GRID_Y.map((y) => (
            <path key={y} d={`M0 ${y + 0.5}H${PLOT_W}`} />
          ))}
        </g>
        <path d={`M0 203.500H${PLOT_W}`} stroke="#cf7388" strokeDasharray="1 1.500" />
        <g opacity="0.6">
          <Candles bars={OLD_BARS} />
        </g>
        <path d="M45.500 271V364" stroke="#b8284f" />
        <path d="M45.500 333V349" stroke="#a01f45" strokeWidth="1.500" />
        <Candles bars={BARS} />
        <path d={`M0 297H${PLOT_W}M0 379H${PLOT_W}`} stroke="#3f9a7d" strokeWidth="1.600" />
        {OI.map(([y, call, put]) => (
          <g key={y}>
            <rect x={PLOT_W - call} y={y} width={call} height="9" fill="#ec7a93" />
            <rect x={PLOT_W - put} y={y + 9} width={put} height="9" fill="#79cfb2" />
          </g>
        ))}
        <path d={`M900 379H${PLOT_W}`} stroke="#3f9a7d" strokeWidth="1.200" />
        <path d={`M413.500 0V${PLOT_H}M0 332.500H${PLOT_W}`} stroke="#a6a8ae" strokeDasharray="4 4" />
        <path d="M413.500 325V341M406 332.500H421" stroke="#0d0e12" strokeWidth="1.800" />
      </PlotSvg>
      <Legend>
        <LegendTop>
          <LegendTitle>NIFTY50-INDEX · 15s · NSE</LegendTitle>
          <LiveDot />
          <Ohlc>
            O<b>23,748.85</b>
          </Ohlc>
          <Ohlc>
            H<b>23,751.80</b>
          </Ohlc>
          <Ohlc>
            L<b>23,748.40</b>
          </Ohlc>
          <Ohlc>
            C<b>23,751.60</b>
          </Ohlc>
          <Ohlc>
            <b>+1.70 (+0.01%)</b>
          </Ohlc>
        </LegendTop>
        <TradeRow>
          <TradeButton $color="#c9264f">
            <strong>23,748.10</strong>SELL
          </TradeButton>
          <Spread>0.00</Spread>
          <TradeButton $color="#3656d4">
            <strong>23,748.10</strong>BUY
          </TradeButton>
        </TradeRow>
        <Study $muted>
          VPVR Number Of Rows 24 Up/Down 70
          <StudyToggle aria-label="Show VPVR">
            <HiddenEye />
          </StudyToggle>
        </Study>
        <Study $muted>
          Volume
          <StudyToggle aria-label="Show Volume">
            <HiddenEye />
          </StudyToggle>
        </Study>
        <Study>
          <span>
            FYERS OI Profile <i>10</i>
          </span>
          <span>n/a</span>
        </Study>
        <CollapseButton aria-label="Collapse legend">
          <Icon size={10} box={10} w={1.300}>
            <path d="M2 6.500l3-3 3 3" />
          </Icon>
        </CollapseButton>
      </Legend>
      <SymbolFlag $y={196}>NIFTY50-INDEX</SymbolFlag>
      <AddAlert $y={323} aria-label="Add alert">
        <Icon size={15} box={15}>
          <circle cx="7.500" cy="7.500" r="6.500" />
          <path d="M7.500 4v7M4 7.500h7" />
        </Icon>
      </AddAlert>
    </Plot>
    <PriceAxis>
      <PriceTicks>
        {PRICES.map((p) => (
          <span key={p}>{p === "23,750.00" ? "" : p}</span>
        ))}
      </PriceTicks>
      <PriceTag $y={196} $color="#dc2350">
        23,748.10
      </PriceTag>
      <PriceTag $y={290} $color="#17a777">
        23,669.10
      </PriceTag>
      <PriceTag $y={323} $color="#10121c" $tall>
        23,639.15
      </PriceTag>
      <PriceTag $y={372} $color="#17a777">
        23,600.05
      </PriceTag>
    </PriceAxis>
    <TimeAxis>
      <TimeTicks>
        {TIMES.map((t, i) => (
          <span key={i}>{t}</span>
        ))}
      </TimeTicks>
      <TimeTag>{"12 Mar '26   11:16:45"}</TimeTag>
    </TimeAxis>
    <AxisCorner aria-label="Axis settings">
      <Icon size={14} box={14} w={1.100}>
        <path d="M4 1.500h6L13 7l-3 5.500H4L1 7z" />
        <circle cx="7" cy="7" r="1.800" />
      </Icon>
    </AxisCorner>
    <RangeBar>
      {RANGES.map((r) => (
        <RangeButton key={r}>{r}</RangeButton>
      ))}
      <RangeDivider />
      <GotoDate aria-label="Go to date">
        <Icon>
          <path d="M2.500 9V5.500A2 2 0 0 1 4.500 3.500h12a2 2 0 0 1 2 2v10.500a2 2 0 0 1-2 2H11M2.500 7.500h16M6 1.500v3.500M14.500 1.500v3.500M1.500 14.500h7M5.500 11.500l3 3-3 3" />
        </Icon>
      </GotoDate>
      <RangeButton>13:27:43 UTC+5:30</RangeButton>
      <RangeDivider />
      <ScaleOptions>
        <RangeButton>%</RangeButton>
        <RangeButton>log</RangeButton>
        <RangeButton $accent>auto</RangeButton>
      </ScaleOptions>
    </RangeBar>
  </ChartCard>
);

/* ---------- account panel ---------- */

const ChartColumn = styled.div`
  display: flex;
  flex-direction: column;
  gap: 4px;
`;

const AccountBar = styled.footer`
  display: flex;
  align-items: center;
  height: 36px;
  padding: 0 8px 0 15px;
  border-radius: 4px 4px 0 0;
  background: #fff;
  font-size: 12px;
  font-weight: 500;
`;

const AccountButton = styled.button<{ $boxed?: boolean }>`
  height: 22px;
  line-height: 18px;
  ${(p) =>
    p.$boxed &&
    css`
      width: 54px;
      margin-left: 11px;
      border: 1px solid #ebecef;
      border-radius: 4px;
    `}
`;

const PanelActions = styled.div`
  display: flex;
  gap: 13px;
  margin-left: auto;
`;

const ChatBubble = styled.button`
  position: absolute;
  left: -17px;
  bottom: 11px;
  width: 36px;
  height: 36px;
  border-radius: 50%;
  background: #4763e4;
  box-shadow: 0 1px 5px rgba(60, 80, 200, 0.35);
  color: #fff;
  font-size: 17px;
  font-weight: 600;
  line-height: 34px;
`;

const RightSide = styled.div`
  position: relative;
  display: grid;
`;

/* ---------- taskbar ---------- */

const Taskbar = styled.footer`
  display: grid;
  grid-template-columns: 1fr auto 1fr;
  align-items: center;
  height: 39px;
  border-top: 1px solid #c9cacb;
  background: linear-gradient(to right, #dadcdc 0 30%, #f3ead2 46%, #f4e9d2 62%, #dadada 68% 100%);
`;

const Weather = styled.button`
  position: relative;
  display: flex;
  align-items: center;
  gap: 6px;
  padding-left: 17px;
  font-size: 10px;
  line-height: 14px;
  text-align: left;

  small {
    display: block;
    color: #66686c;
    font-size: 10px;
  }
`;

const WeatherBadge = styled.span`
  position: absolute;
  top: -2px;
  left: 25px;
  width: 14px;
  height: 14px;
  border-radius: 50%;
  background: #b81f24;
  color: #fff;
  font-size: 9px;
  line-height: 14px;
  text-align: center;
`;

const Dock = styled.nav`
  display: flex;
  align-items: center;
`;

const DockButton = styled.button<{ $active?: boolean; $mark?: string }>`
  position: relative;
  display: grid;
  place-items: center;
  width: 37px;
  height: 38px;

  ${(p) =>
    p.$active &&
    css`
      background: linear-gradient(#fdf8ec, #fdf8ec) center / 28px 32px no-repeat;
    `}

  &::after {
    content: ${(p) => (p.$mark ? '""' : "none")};
    position: absolute;
    bottom: 4px;
    left: 50%;
    width: ${(p) => (p.$active ? 12 : 5)}px;
    height: 2px;
    margin-left: ${(p) => (p.$active ? -6 : -3)}px;
    border-radius: 1px;
    background: ${(p) => p.$mark};
  }
`;

const SearchBox = styled.label`
  display: flex;
  align-items: center;
  gap: 9px;
  width: 181px;
  height: 26px;
  margin: 0 2px 0 4px;
  padding: 0 2px 0 9px;
  border-radius: 13px;
  background: #fbfaf5;
`;

const SearchInput = styled.input`
  flex: 1;
  min-width: 0;
  border: 0;
  padding: 0;
  outline: 0;
  background: none;
  color: #5c5d60;
  font-family: ${CHROME_FONT};
  font-size: 11px;

  &::placeholder {
    color: #5c5d60;
    opacity: 1;
  }
`;

const SnakeArt = styled.svg`
  display: block;
  width: 38px;
  height: 22px;
`;

const Tray = styled.div`
  display: flex;
  align-items: center;
  justify-content: flex-end;
  gap: 7px;
  padding-right: 16px;
  color: #25272b;
  font-size: 10px;
  line-height: 13px;
`;

const TrayButton = styled.button<{ $w?: number; $right?: boolean }>`
  display: grid;
  place-items: ${(p) => (p.$right ? "center end" : "center")};
  width: ${(p) => (p.$w ? `${p.$w}px` : "auto")};
`;

const TrayIcons = styled.span`
  display: flex;
  align-items: center;
  gap: 7px;
`;

const Clock = styled.time`
  text-align: right;
`;

const DOCK: { name: string; mark?: string; active?: boolean; art: React.ReactNode }[] = [
  {
    name: "Task view",
    art: (
      <>
        <path d="M9 4h14v12H9z" fill="#f6f6f4" />
        <path d="M3 8h13v13.500H3z" fill="#2b2b2b" />
        <path d="M8.500 8H18v9.500H8.500z" fill="#bdbdbb" />
      </>
    ),
  },
  {
    name: "Copilot",
    art: (
      <>
        <path d="M7 3h7c2 0 2.500 1 3 3l1 3h-6c-2 0-3 1-3.500 3L7 17H4.500C2 17 1.500 15 2.200 12.500L4 6c.6-2 1.300-3 3-3z" fill="#2d8fe6" />
        <path d="M4 13l2-7c.5-2 1.500-3 3-3H6.500C5 3 4.300 4.500 3.800 6L2.200 12C1.500 15 2 17 4.500 17H7l1-4z" fill="#3fc380" />
        <path d="M17 21h-7c-2 0-2.500-1-3-3l-1-3h6c2 0 3-1 3.500-3L17 7h2.500c2.500 0 3 2 2.300 4.500L20 18c-.6 2-1.300 3-3 3z" fill="#e1568f" />
        <path d="M7 18c.5 2 1 3 3 3h3c2-1 2.500-3 3-5l.5-3H15c-.7 1.500-1.500 2-3 2H6z" fill="#f2a33c" />
        <path d="M15.500 12L17 7h2.500c2.500 0 3 2 2.300 4.500l-.8 3z" fill="#9a5fe0" />
        <path d="M14 3c2 0 2.500 1 3 3l1 3h-4l-2-6z" fill="#2848c8" />
      </>
    ),
  },
  {
    name: "Chrome",
    active: true,
    mark: "#2569b5",
    art: (
      <>
        <circle cx="11" cy="13" r="9" fill="#f5c32c" />
        <path d="M11 13L3.200 8.500A9 9 0 0 0 10.500 22l4.500-7z" fill="#2c9f52" />
        <path d="M3.200 8.500A9 9 0 0 1 18.800 8.500H11v5z" fill="#dd4437" />
        <circle cx="11" cy="13" r="4.600" fill="#fff" />
        <circle cx="11" cy="13" r="3.600" fill="#3978e6" />
        <circle cx="18" cy="5.500" r="5.500" fill="#553c38" />
        <path d="M19.500 3v5M19.500 6.500a1.500 1.500 0 1 1-3 0 1.500 1.500 0 0 1 3 0" stroke="#ddd" fill="none" />
      </>
    ),
  },
  {
    name: "Files",
    art: (
      <>
        <path d="M2 4.500A1.500 1.500 0 0 1 3.500 3H9l2 2.500h9.500A1.500 1.500 0 0 1 22 7v12a1.500 1.500 0 0 1-1.500 1.500h-17A1.500 1.500 0 0 1 2 19z" fill="#e3a51e" />
        <path d="M2 8h20v11a1.500 1.500 0 0 1-1.500 1.500h-17A1.500 1.500 0 0 1 2 19z" fill="#fad355" />
        <path d="M6 17.500a1.500 1.500 0 0 1 1.500-1.500h9a1.500 1.500 0 0 1 1.500 1.500v4H6z" fill="#2f77bf" />
      </>
    ),
  },
  {
    name: "Edge",
    art: (
      <>
        <circle cx="12" cy="12" r="10" fill="#1c78cf" />
        <path d="M2.500 9.500A10 10 0 0 1 22 12c0 3-2 4.500-5 4.500-2.500 0-3-1-2.500-2 1-2-.5-5-4-5-3.500 0-6.500 1-8 4z" fill="#39c6b5" />
        <path d="M14 2.300A10 10 0 0 1 22 12c0 3-2 4.500-5 4.500-2.500 0-3-1-2.500-2 1-2 1-5-2-7.500z" fill="#62d66c" />
        <path d="M10 10c-3 3-2 9 4 11.500C7 23 2 18 2 12.500 4 10 7 9 10 10z" fill="#125aa6" />
        <path d="M14.500 14.500c-.5 1 0 2 2.500 2 2 0 3.500-.5 4.500-2-1 3-3 4-5 4-3 0-5-2-4-5z" fill="#f4ead2" />
      </>
    ),
  },
  {
    name: "Store",
    art: (
      <>
        <path d="M8 6V3.500A1.500 1.500 0 0 1 9.500 2h5A1.500 1.500 0 0 1 16 3.500V6" fill="none" stroke="#2f9adf" strokeWidth="1.600" />
        <rect x="2.500" y="5.500" width="19" height="16.500" rx="2" fill="#155a9e" />
        <path d="M2.500 14h19v6a2 2 0 0 1-2 2h-15a2 2 0 0 1-2-2z" fill="#123f78" />
        <path d="M8 9h3.600v3.600H8z" fill="#e8532e" />
        <path d="M12.400 9H16v3.600h-3.600z" fill="#8fc63e" />
        <path d="M8 13.400h3.600V17H8z" fill="#39a9e8" />
        <path d="M12.400 13.400H16V17h-3.600z" fill="#f8c42e" />
      </>
    ),
  },
  {
    name: "Snipping tool",
    art: (
      <>
        <rect x="3.500" y="3.500" width="7.500" height="8.500" fill="#f8f8f8" stroke="#c9302c" strokeWidth="1.600" strokeDasharray="1.500 1.500" strokeLinecap="butt" />
        <path d="M12.500 5v10l-2 3M8 14h9.500" stroke="#9aa4ad" strokeWidth="1.800" fill="none" />
        <circle cx="10" cy="20" r="2.200" fill="none" stroke="#3e96c9" strokeWidth="1.500" />
        <circle cx="19.500" cy="13.500" r="2.200" fill="none" stroke="#3e96c9" strokeWidth="1.500" />
      </>
    ),
  },
  {
    name: "Outlook",
    art: (
      <>
        <path d="M5 9L13 3a3 3 0 0 1 3.500 0L22 8v5H5z" fill="#2b63c9" />
        <path d="M8 8.500L15 4l5 3.500-8 6.500z" fill="#59a8f2" />
        <path d="M5 12h17v8a2 2 0 0 1-2 2H7z" fill="#a6d4fb" />
        <path d="M5 10l16.500 11.500H7A2 2 0 0 1 5 20z" fill="#2c7be0" />
        <rect x="1.500" y="12" width="9" height="9" rx="1.500" fill="#1450a8" />
        <circle cx="6" cy="16.500" r="2.300" fill="none" stroke="#fff" strokeWidth="1.300" />
      </>
    ),
  },
  {
    name: "OBS",
    mark: "#85868a",
    art: (
      <>
        <circle cx="11" cy="13" r="9.500" fill="#222126" />
        <path d="M11 13c-3 0-4-3-2.500-5.500M11 13c1.500-2.500 5-2 6 1M11 13c1.500 2.500-1 5-4 4.500" stroke="#c9c8cc" strokeWidth="1.600" fill="none" />
        <circle cx="18.500" cy="5" r="5" fill="#e20d14" />
      </>
    ),
  },
  {
    name: "Calculator",
    mark: "#85868a",
    art: (
      <>
        <rect x="4" y="2" width="16" height="20.500" rx="1.500" fill="#4f6475" />
        <rect x="6" y="4" width="12" height="4" fill="#5fd0dd" />
        <path d="M6 10h3.300v3H6zM10.300 10h3.300v3h-3.300zM14.600 10H18v3h-3.400zM6 14h3.300v3H6zM10.300 14h3.300v3h-3.300zM6 18h3.300v3H6zM10.300 18h3.300v3h-3.300z" fill="#e6ebee" />
        <path d="M14.600 14H18v7h-3.400z" fill="#1c5d95" />
      </>
    ),
  },
];

const Windows = () => (
  <Taskbar>
    <Weather>
      <Icon size={20} box={20}>
        <defs>
          <linearGradient id="sun" x1="0" y1="0" x2="0" y2="1">
            <stop offset="0" stopColor="#f8b63a" />
            <stop offset="1" stopColor="#e8701c" />
          </linearGradient>
        </defs>
        <circle cx="10" cy="9" r="8.500" fill="url(#sun)" stroke="none" />
      </Icon>
      <WeatherBadge>5</WeatherBadge>
      <span>
        34°C
        <small>Sunny</small>
      </span>
    </Weather>
    <Dock aria-label="Taskbar">
      <DockButton aria-label="Start">
        <Icon size={20} box={20}>
          <g stroke="none">
            <path d="M0.500 0.500h9v9h-9z" fill="#3fc0f3" />
            <path d="M10.500 0.500h9v9h-9z" fill="#2aa7ea" />
            <path d="M0.500 10.500h9v9h-9z" fill="#2199e2" />
            <path d="M10.500 10.500h9v9h-9z" fill="#0f80d4" />
          </g>
        </Icon>
      </DockButton>
      <SearchBox>
        <Icon size={13} box={13} w={1.500}>
          <circle cx="5.500" cy="5.500" r="4.300" />
          <path d="M8.800 8.800l3.400 3.400" />
        </Icon>
        <SearchInput placeholder="Search" aria-label="Search" />
        <SnakeArt viewBox="0 0 38 22" aria-hidden="true">
          <path d="M2 12C2 5 9 3 14 1.500 20-.5 28 1 31 5c4 1 5 5 4 10L4 17z" fill="#d9d6c8" />
          <path d="M1 17c8 1 16 1 22 0 5-1 9-2 14-2l-2 4-6 1-2 2-4-2c-8 1-16 0-22-1z" fill="#7b3f22" />
          <path d="M7 11c3-5 9-4 12 0s8 2 8-2-5-5-8-1-7 8-12 7" fill="none" stroke="#5a3019" strokeWidth="3.600" />
          <path d="M7 11c3-5 9-4 12 0s8 2 8-2-5-5-8-1-7 8-12 7" fill="none" stroke="#b07a44" strokeWidth="1.400" strokeDasharray="2 1.500" />
          <path d="M3 15l-2-3 4 1zM30 12l3-3v4zM5 19l-3 1 2-3z" fill="#3f8c46" />
        </SnakeArt>
      </SearchBox>
      {DOCK.map((d) => (
        <DockButton key={d.name} aria-label={d.name} $active={d.active} $mark={d.mark}>
          <Icon size={22} box={24}>
            <g stroke="none">{d.art}</g>
          </Icon>
        </DockButton>
      ))}
    </Dock>
    <Tray>
      <TrayButton aria-label="Hidden icons" $w={20}>
        <Icon size={10} box={10} w={1.300}>
          <path d="M1.500 7L5 3.500 8.500 7" />
        </Icon>
      </TrayButton>
      <TrayButton aria-label="Cloud sync off" $w={20}>
        <Icon size={14} box={14} w={1.100}>
          <path d="M4 11.500a3 3 0 0 1-.5-5.800A4 4 0 0 1 11 5.500a3 3 0 0 1-.5 6z" />
          <path d="M2 2l10.500 10.500" />
        </Icon>
      </TrayButton>
      <TrayButton $w={34}>
        <span>
          ENG
          <br />
          IN
        </span>
      </TrayButton>
      <TrayButton aria-label="Network, sound and battery">
        <TrayIcons>
          <Icon size={12} box={12} w={1.100}>
            <path d="M1 5c3-3.200 7-3.200 10 0M2.800 7c2-2 4.400-2 6.400 0" />
            <path d="M4.500 8.800c1-.8 2-.8 3 0L6 10.500z" />
          </Icon>
          <Icon size={13} box={13}>
            <path d="M1 5h2l3-2.500v8L3 8H1zM8 5c.8 1 .8 2 0 3M9.700 3.500c1.500 1.800 1.500 4.200 0 6M11.200 2.200c2.200 2.500 2.200 6 0 8.600" />
          </Icon>
          <Icon size={17} box={17} w={1.200}>
            <rect x="1" y="5" width="13" height="7.500" rx="1.800" />
            <rect x="2.700" y="6.700" width="6.500" height="4.100" fill="currentColor" stroke="none" />
            <path d="M15.800 7.500v2.500" />
          </Icon>
        </TrayIcons>
      </TrayButton>
      <TrayButton $w={58} $right>
        <Clock>
          13:27
          <br />
          12-03-2026
        </Clock>
      </TrayButton>
    </Tray>
  </Taskbar>
);

export default function App() {
  return (
    <Page>
      <GlobalStyle />
      <BrowserTabs />
      <AddressBar />
      <ChartToolbar />
      <Workspace>
        <DrawingRail />
        <ChartColumn>
          <Chart />
          <AccountBar>
            <AccountButton>Account Manager</AccountButton>
            <AccountButton $boxed>Trade</AccountButton>
            <PanelActions>
              <AccountButton aria-label="Expand panel">
                <Icon>
                  <path d="M2.500 12.500L10 7l7.500 5.500" />
                </Icon>
              </AccountButton>
              <AccountButton aria-label="Maximize panel">
                <Icon>
                  <path d="M3 7V4.500A1.500 1.500 0 0 1 4.500 3H16a1.500 1.500 0 0 1 1.500 1.500V7M3 13v2.500A1.500 1.500 0 0 0 4.500 17H16a1.500 1.500 0 0 0 1.500-1.500V13" />
                </Icon>
              </AccountButton>
            </PanelActions>
          </AccountBar>
        </ChartColumn>
        <RightSide>
          <WidgetRail />
          <ChatBubble aria-label="Open assistant">B</ChatBubble>
        </RightSide>
      </Workspace>
      <Windows />
    </Page>
  );
}
